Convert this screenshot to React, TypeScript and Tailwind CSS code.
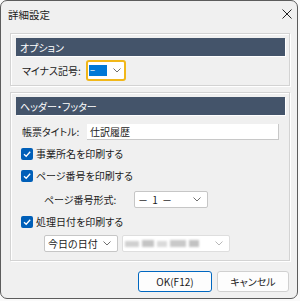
import { ReactNode } from "react";

const font = "font-['Noto_Sans_CJK_JP','Noto_Sans',sans-serif] [font-feature-settings:'palt']";

function Chevron({ light = false }: { light?: boolean }) {
  return (
    <svg width="8" height="5" viewBox="0 0 8 5" className="shrink-0">
      <polyline
        points="0.5,0.5 4,4 7.5,0.5"
        fill="none"
        stroke={light ? "#b8b8b8" : "#707070"}
        strokeWidth="1"
      />
    </svg>
  );
}

function Check({ label }: { label: string }) {
  return (
    <div className="flex items-center h-[17px] -ml-[1px] gap-[3px]">
      <span className="w-[12px] h-[12px] rounded-[2px] bg-[#005fb8] flex items-center justify-center">
        <svg width="10" height="10" viewBox="0 0 10 10">
          <path d="M2 5.2 L4.2 7.3 L8.2 2.8" fill="none" stroke="white" strokeWidth="1.3" />
        </svg>
      </span>
      <span>{label}</span>
    </div>
  );
}

function GroupBox({ title, children, className = "" }: { title: string; children: ReactNode; className?: string }) {
  return (
    <div
      className={`border border-[#d3d3d3] shadow-[1px_1px_0_#ffffff,inset_1px_1px_0_#ffffff] pt-[4px] pl-[5px] pr-[4px] ${className}`}
    >
      <div className="h-[18px] bg-[#44546a] shadow-[1px_1px_0_#ffffff] text-white flex items-center pl-[4px]">
        {title}
      </div>
      {children}
    </div>
  );
}

export default function App() {
  return (
    <div className={`w-[300px] h-[301px] bg-[#fafafa] text-[10px] text-[#1b1b1b] ${font}`}>
      <div className="w-[298px] h-[299px] rounded-[7px] border border-[#5c5c5c] bg-[#f0f0f0] flex flex-col overflow-hidden">
        {/* title bar */}
        <div className="h-[27px] flex items-center justify-between pl-[7px] pr-[5px] shrink-0">
          <span className="text-[10.5px]">詳細設定</span>
          <svg width="10" height="10" viewBox="0 0 10 10" className="-mt-[2px]">
            <path d="M0.5 0.5 L9.5 9.5 M9.5 0.5 L0.5 9.5" stroke="#222" strokeWidth="1" />
          </svg>
        </div>

        <div className="flex flex-col pl-[9px] pr-[7px] mt-[5px]">
          <GroupBox title="オプション" className="pb-[4px]">
            <div className="mt-[4px] h-[21px] flex items-center pl-[6px]">
              <span className="w-[64px]">マイナス記号:</span>
              <div className="w-[40px] h-[21px] border-2 border-[#f1b719] rounded-[3px] bg-white flex items-center pr-[3px]">
                <div className="ml-[1px] w-[18px] h-[11px] bg-[#0078d7] text-white flex items-center text-[9px] leading-none pl-[1px]">
                  −
                </div>
                <div className="flex-1" />
                <Chevron />
              </div>
            </div>
          </GroupBox>

          <GroupBox title="ヘッダー・フッター" className="mt-[6px] pb-[8px]">
            <div className="pl-[6px] pr-[6px] flex flex-col">
              <div className="mt-[8px] h-[17px] flex items-center">
                <span className="w-[65px] shrink-0">帳票タイトル:</span>
                <div className="flex-1 h-[16px] bg-white border-b border-r border-[#c8c8c8] flex items-center pl-[3px]">
                  仕訳履歴
                </div>
              </div>

              <div className="mt-[5px]">
                <Check label="事業所名を印刷する" />
              </div>
              <div className="mt-[5px]">
                <Check label="ページ番号を印刷する" />
              </div>

              <div className="mt-[7px] h-[17px] flex items-center">
                <span className="ml-[22px] w-[90px] shrink-0">ページ番号形式:</span>
                <div className="w-[74px] h-[17px] bg-white border border-[#c6c6c6] rounded-[2px] flex items-center justify-between pl-[3px] pr-[6px]">
                  <span className="tracking-[1px]">－ 1 －</span>
                  <Chevron />
                </div>
              </div>

              <div className="mt-[5px]">
                <Check label="処理日付を印刷する" />
              </div>

              <div className="mt-[5px] h-[17px] flex items-center gap-[4px] ml-[22px]">
                <div className="w-[74px] h-[17px] bg-white border border-[#c6c6c6] rounded-[2px] flex items-center justify-between pl-[3px] pr-[6px]">
                  <span>今日の日付</span>
                  <Chevron />
                </div>
                <div className="w-[108px] h-[17px] bg-white border border-[#dedede] rounded-[2px] flex items-center justify-between pl-[2px] pr-[6px]">
                  <div className="flex items-center gap-[3px] blur-[1px]">
                    <span className="w-[14px] h-[6px] bg-[#d0d0d0]" />
                    <span className="w-[12px] h-[7px] bg-[#c4c4c4]" />
                    <span className="w-[10px] h-[6px] bg-[#dadada]" />
                    <span className="w-[16px] h-[7px] bg-[#c9c9c9]" />
                    <span className="w-[10px] h-[7px] bg-[#c2c2c2]" />
                  </div>
                  <Chevron light />
                </div>
              </div>
            </div>
          </GroupBox>

          <div className="mt-[10px] flex justify-end gap-[5px] pr-[1px]">
            <button className="w-[74px] h-[21px] rounded-[3px] bg-[#fdfdfd] border border-[#0067c0] flex items-center justify-center">
              OK(F12)
            </button>
            <button className="w-[72px] h-[21px] rounded-[3px] bg-[#fdfdfd] border border-[#d0d0d0] flex items-center justify-center">
              キャンセル
            </button>
          </div>
        </div>
      </div>
    </div>
  );
}
